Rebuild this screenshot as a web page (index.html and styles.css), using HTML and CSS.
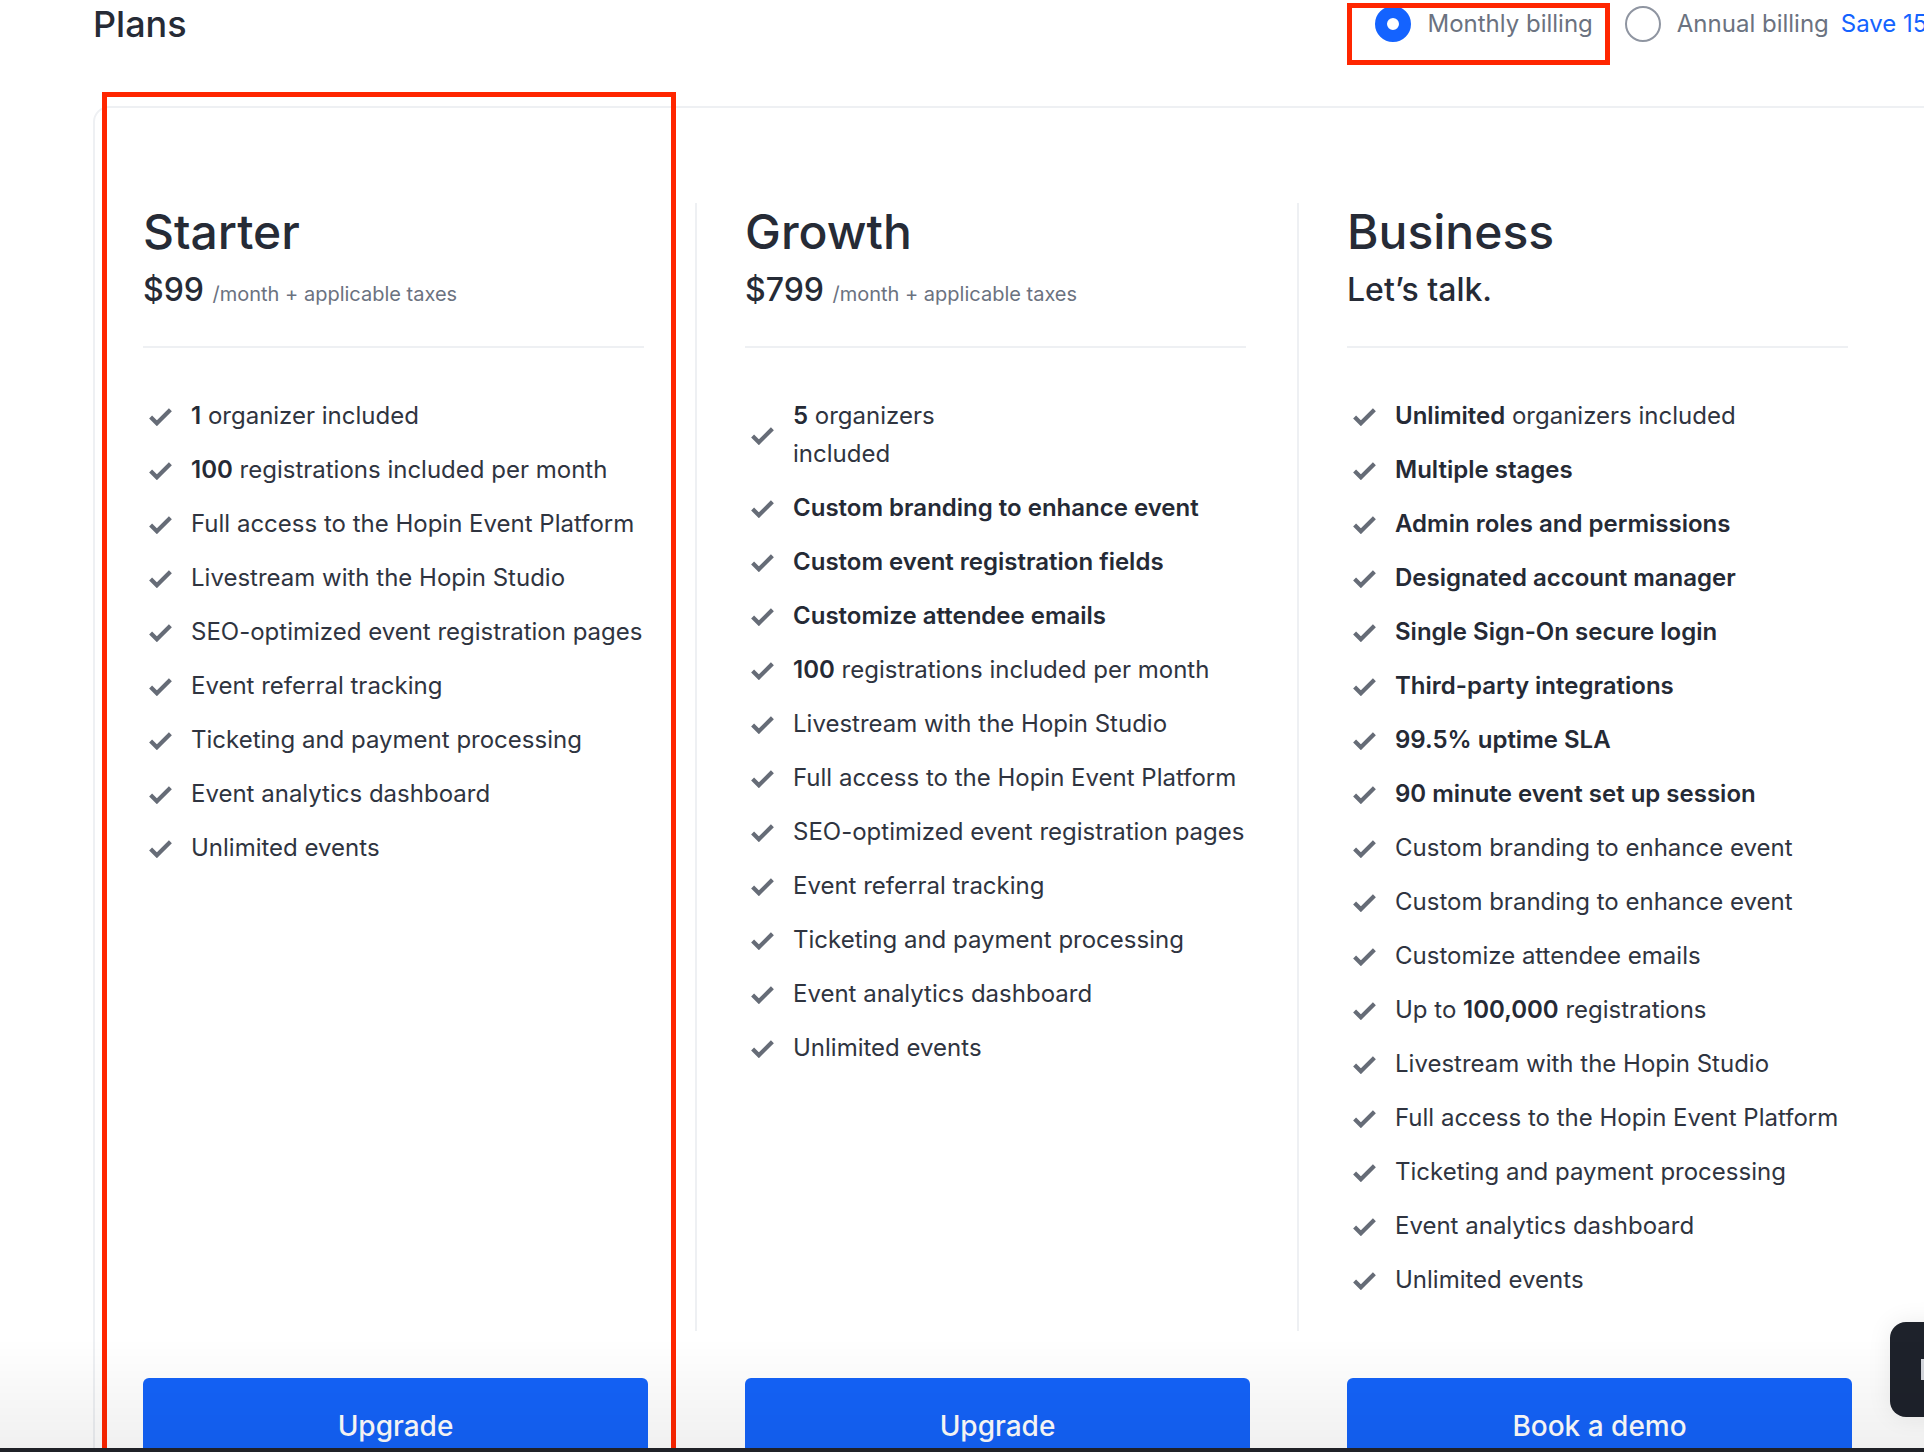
FILE: index.html
```html
<!DOCTYPE html>
<html lang="en">
  <head>
    <meta charset="UTF-8" />
    <meta name="viewport" content="width=device-width, initial-scale=1.0" />
    <title>Plans</title>
    <link rel="stylesheet" href="styles.css">
  </head>
  <body>
    <div class="page">
      <div class="header">
        <h1>Plans</h1>
        <div class="billing">
          <label class="billing-option">
            <span class="radio radio-checked"></span>
            Monthly billing
          </label>
          <label class="billing-option">
            <span class="radio"></span>
            Annual billing
          </label>
          <span class="save">Save 15%</span>
        </div>
      </div>

      <div class="plans-card">
        <div class="plan">
          <div class="plan-body">
            <div class="plan-head">
              <h2>Starter</h2>
              <p class="price">$99 <span class="price-note">/month + applicable taxes</span></p>
            </div>
            <ul class="features">
              <li><svg class="check" viewBox="0 0 24 18"><path d="M2.5 9.5 L8.5 15.5 L21.5 2.5" /></svg><span><b>1</b> organizer included</span></li>
              <li><svg class="check" viewBox="0 0 24 18"><path d="M2.5 9.5 L8.5 15.5 L21.5 2.5" /></svg><span><b>100</b> registrations included per month</span></li>
              <li><svg class="check" viewBox="0 0 24 18"><path d="M2.5 9.5 L8.5 15.5 L21.5 2.5" /></svg><span>Full access to the Hopin Event Platform</span></li>
              <li><svg class="check" viewBox="0 0 24 18"><path d="M2.5 9.5 L8.5 15.5 L21.5 2.5" /></svg><span>Livestream with the Hopin Studio</span></li>
              <li><svg class="check" viewBox="0 0 24 18"><path d="M2.5 9.5 L8.5 15.5 L21.5 2.5" /></svg><span>SEO-optimized event registration pages</span></li>
              <li><svg class="check" viewBox="0 0 24 18"><path d="M2.5 9.5 L8.5 15.5 L21.5 2.5" /></svg><span>Event referral tracking</span></li>
              <li><svg class="check" viewBox="0 0 24 18"><path d="M2.5 9.5 L8.5 15.5 L21.5 2.5" /></svg><span>Ticketing and payment processing</span></li>
              <li><svg class="check" viewBox="0 0 24 18"><path d="M2.5 9.5 L8.5 15.5 L21.5 2.5" /></svg><span>Event analytics dashboard</span></li>
              <li><svg class="check" viewBox="0 0 24 18"><path d="M2.5 9.5 L8.5 15.5 L21.5 2.5" /></svg><span>Unlimited events</span></li>
            </ul>
          </div>
          <div class="plan-action">
            <button>Upgrade</button>
          </div>
        </div>

        <div class="plan">
          <div class="plan-body">
            <div class="plan-head">
              <h2>Growth</h2>
              <p class="price">$799 <span class="price-note">/month + applicable taxes</span></p>
            </div>
            <ul class="features">
              <li><svg class="check" viewBox="0 0 24 18"><path d="M2.5 9.5 L8.5 15.5 L21.5 2.5" /></svg><span><b>5</b> organizers<br>included</span></li>
              <li><svg class="check" viewBox="0 0 24 18"><path d="M2.5 9.5 L8.5 15.5 L21.5 2.5" /></svg><span><b>Custom branding to enhance event</b></span></li>
              <li><svg class="check" viewBox="0 0 24 18"><path d="M2.5 9.5 L8.5 15.5 L21.5 2.5" /></svg><span><b>Custom event registration fields</b></span></li>
              <li><svg class="check" viewBox="0 0 24 18"><path d="M2.5 9.5 L8.5 15.5 L21.5 2.5" /></svg><span><b>Customize attendee emails</b></span></li>
              <li><svg class="check" viewBox="0 0 24 18"><path d="M2.5 9.5 L8.5 15.5 L21.5 2.5" /></svg><span><b>100</b> registrations included per month</span></li>
              <li><svg class="check" viewBox="0 0 24 18"><path d="M2.5 9.5 L8.5 15.5 L21.5 2.5" /></svg><span>Livestream with the Hopin Studio</span></li>
              <li><svg class="check" viewBox="0 0 24 18"><path d="M2.5 9.5 L8.5 15.5 L21.5 2.5" /></svg><span>Full access to the Hopin Event Platform</span></li>
              <li><svg class="check" viewBox="0 0 24 18"><path d="M2.5 9.5 L8.5 15.5 L21.5 2.5" /></svg><span>SEO-optimized event registration pages</span></li>
              <li><svg class="check" viewBox="0 0 24 18"><path d="M2.5 9.5 L8.5 15.5 L21.5 2.5" /></svg><span>Event referral tracking</span></li>
              <li><svg class="check" viewBox="0 0 24 18"><path d="M2.5 9.5 L8.5 15.5 L21.5 2.5" /></svg><span>Ticketing and payment processing</span></li>
              <li><svg class="check" viewBox="0 0 24 18"><path d="M2.5 9.5 L8.5 15.5 L21.5 2.5" /></svg><span>Event analytics dashboard</span></li>
              <li><svg class="check" viewBox="0 0 24 18"><path d="M2.5 9.5 L8.5 15.5 L21.5 2.5" /></svg><span>Unlimited events</span></li>
            </ul>
          </div>
          <div class="plan-action">
            <button>Upgrade</button>
          </div>
        </div>

        <div class="plan">
          <div class="plan-body">
            <div class="plan-head">
              <h2>Business</h2>
              <p class="price">Let’s talk.</p>
            </div>
            <ul class="features">
              <li><svg class="check" viewBox="0 0 24 18"><path d="M2.5 9.5 L8.5 15.5 L21.5 2.5" /></svg><span><b>Unlimited</b> organizers included</span></li>
              <li><svg class="check" viewBox="0 0 24 18"><path d="M2.5 9.5 L8.5 15.5 L21.5 2.5" /></svg><span><b>Multiple stages</b></span></li>
              <li><svg class="check" viewBox="0 0 24 18"><path d="M2.5 9.5 L8.5 15.5 L21.5 2.5" /></svg><span><b>Admin roles and permissions</b></span></li>
              <li><svg class="check" viewBox="0 0 24 18"><path d="M2.5 9.5 L8.5 15.5 L21.5 2.5" /></svg><span><b>Designated account manager</b></span></li>
              <li><svg class="check" viewBox="0 0 24 18"><path d="M2.5 9.5 L8.5 15.5 L21.5 2.5" /></svg><span><b>Single Sign-On secure login</b></span></li>
              <li><svg class="check" viewBox="0 0 24 18"><path d="M2.5 9.5 L8.5 15.5 L21.5 2.5" /></svg><span><b>Third-party integrations</b></span></li>
              <li><svg class="check" viewBox="0 0 24 18"><path d="M2.5 9.5 L8.5 15.5 L21.5 2.5" /></svg><span><b>99.5% uptime SLA</b></span></li>
              <li><svg class="check" viewBox="0 0 24 18"><path d="M2.5 9.5 L8.5 15.5 L21.5 2.5" /></svg><span><b>90 minute event set up session</b></span></li>
              <li><svg class="check" viewBox="0 0 24 18"><path d="M2.5 9.5 L8.5 15.5 L21.5 2.5" /></svg><span>Custom branding to enhance event</span></li>
              <li><svg class="check" viewBox="0 0 24 18"><path d="M2.5 9.5 L8.5 15.5 L21.5 2.5" /></svg><span>Custom branding to enhance event</span></li>
              <li><svg class="check" viewBox="0 0 24 18"><path d="M2.5 9.5 L8.5 15.5 L21.5 2.5" /></svg><span>Customize attendee emails</span></li>
              <li><svg class="check" viewBox="0 0 24 18"><path d="M2.5 9.5 L8.5 15.5 L21.5 2.5" /></svg><span>Up to <b>100,000</b> registrations</span></li>
              <li><svg class="check" viewBox="0 0 24 18"><path d="M2.5 9.5 L8.5 15.5 L21.5 2.5" /></svg><span>Livestream with the Hopin Studio</span></li>
              <li><svg class="check" viewBox="0 0 24 18"><path d="M2.5 9.5 L8.5 15.5 L21.5 2.5" /></svg><span>Full access to the Hopin Event Platform</span></li>
              <li><svg class="check" viewBox="0 0 24 18"><path d="M2.5 9.5 L8.5 15.5 L21.5 2.5" /></svg><span>Ticketing and payment processing</span></li>
              <li><svg class="check" viewBox="0 0 24 18"><path d="M2.5 9.5 L8.5 15.5 L21.5 2.5" /></svg><span>Event analytics dashboard</span></li>
              <li><svg class="check" viewBox="0 0 24 18"><path d="M2.5 9.5 L8.5 15.5 L21.5 2.5" /></svg><span>Unlimited events</span></li>
            </ul>
          </div>
          <div class="plan-action">
            <button>Book a demo</button>
          </div>
        </div>
      </div>

      <!-- annotation boxes drawn over the screenshot -->
      <div class="mark mark-plan"></div>
      <div class="mark mark-billing"></div>
    </div>

    <div class="chat-widget"><span class="chat-icon"></span></div>
    <div class="bottom-fade"></div>
    <div class="bottom-bar"></div>
  </body>
</html>
```

FILE: styles.css
```css
html,
body {
  margin: 0;
  padding: 0;
  height: 100%;
  overflow: hidden;
  background-color: #fff;
}
body {
  font-family: Inter, "Noto Sans", Arial, sans-serif;
  color: #2f3440;
}
.page {
  position: relative;
  width: 1858px;
  padding-left: 93px;
}

/* header */
.header {
  display: flex;
  align-items: center;
  justify-content: space-between;
  height: 47px;
}
.header h1 {
  margin: 0;
  font-size: 36px;
  line-height: 44px;
  font-weight: 500;
  color: #262b36;
}
.billing {
  display: flex;
  align-items: center;
  gap: 32px;
  font-size: 24px;
  color: #6b7280;
}
.billing-option {
  display: flex;
  align-items: center;
  gap: 16px;
}
.radio {
  display: block;
  width: 36px;
  height: 36px;
  box-sizing: border-box;
  border-radius: 50%;
  border: 2px solid #8f95a1;
  background-color: #fff;
}
.radio-checked {
  border: 12px solid #1463ff;
}
.save {
  margin-left: -20px;
  color: #1463ff;
}

/* plans */
.plans-card {
  display: grid;
  grid-template-columns: 600px 602px 602px;
  margin-top: 59px;
  padding: 95px 50px 0 0;
  border: 2px solid #eef0f3;
  border-radius: 16px;
}
.plan {
  display: flex;
  flex-direction: column;
}
.plan-body {
  flex: 1;
  padding: 0 51px 32px 48px;
}
.plan + .plan .plan-body {
  border-left: 2px solid #eef0f3;
}
.plan-head {
  padding-bottom: 37px;
  border-bottom: 2px solid #eef0f3;
}
.plan-head h2 {
  margin: 0;
  font-size: 48px;
  line-height: 58px;
  font-weight: 500;
  color: #262b36;
}
.price {
  margin: 10px 0 0;
  font-size: 32px;
  line-height: 38px;
  font-weight: 500;
  color: #262b36;
}
.price-note {
  font-size: 20px;
  line-height: 1;
  font-weight: 400;
  color: #6b7280;
}
.features {
  list-style: none;
  margin: 49px 0 0;
  padding: 0;
}
.features li {
  display: flex;
  align-items: center;
  gap: 18px;
  margin-bottom: 16px;
  font-size: 24px;
  line-height: 38px;
  white-space: nowrap;
}
.features li:last-child {
  margin-bottom: 0;
}
.features b {
  font-weight: 600;
  color: #252a35;
}
.check {
  flex: none;
  width: 25px;
  height: 19px;
  margin-left: 5px;
  fill: none;
  stroke: #666c77;
  stroke-width: 4;
}
.plan-action {
  margin-top: 47px;
  padding-left: 48px;
}
.plan + .plan .plan-action {
  padding-left: 50px;
}
.plan-action button {
  width: 505px;
  height: 96px;
  border: none;
  border-radius: 6px;
  background-color: #1463f9;
  color: #fff;
  font-family: inherit;
  font-size: 28px;
  font-weight: 500;
  cursor: pointer;
}

/* red annotation rectangles */
.mark {
  position: absolute;
  border: 5px solid #ff2600;
  pointer-events: none;
}
.mark-plan {
  left: 102px;
  top: 92px;
  width: 564px;
  height: 1400px;
}
.mark-billing {
  left: 1347px;
  top: 3px;
  width: 253px;
  height: 52px;
}

/* fixed overlays at the bottom of the window */
.chat-widget {
  position: fixed;
  left: 1890px;
  top: 1322px;
  width: 90px;
  height: 95px;
  border-radius: 16px;
  background-color: #1e222b;
  box-shadow: 0 0 24px rgba(0, 0, 0, 0.08);
}
.chat-icon {
  position: absolute;
  left: 31px;
  top: 37px;
  width: 3px;
  height: 21px;
  background-color: #d5d8de;
}
.bottom-fade {
  position: fixed;
  left: 0;
  right: 0;
  bottom: 4px;
  height: 110px;
  background: linear-gradient(rgba(0, 0, 0, 0), rgba(0, 0, 0, 0.06));
  pointer-events: none;
}
.bottom-bar {
  position: fixed;
  left: 0;
  right: 0;
  bottom: 0;
  height: 4px;
  background-color: #1f2127;
}
```
